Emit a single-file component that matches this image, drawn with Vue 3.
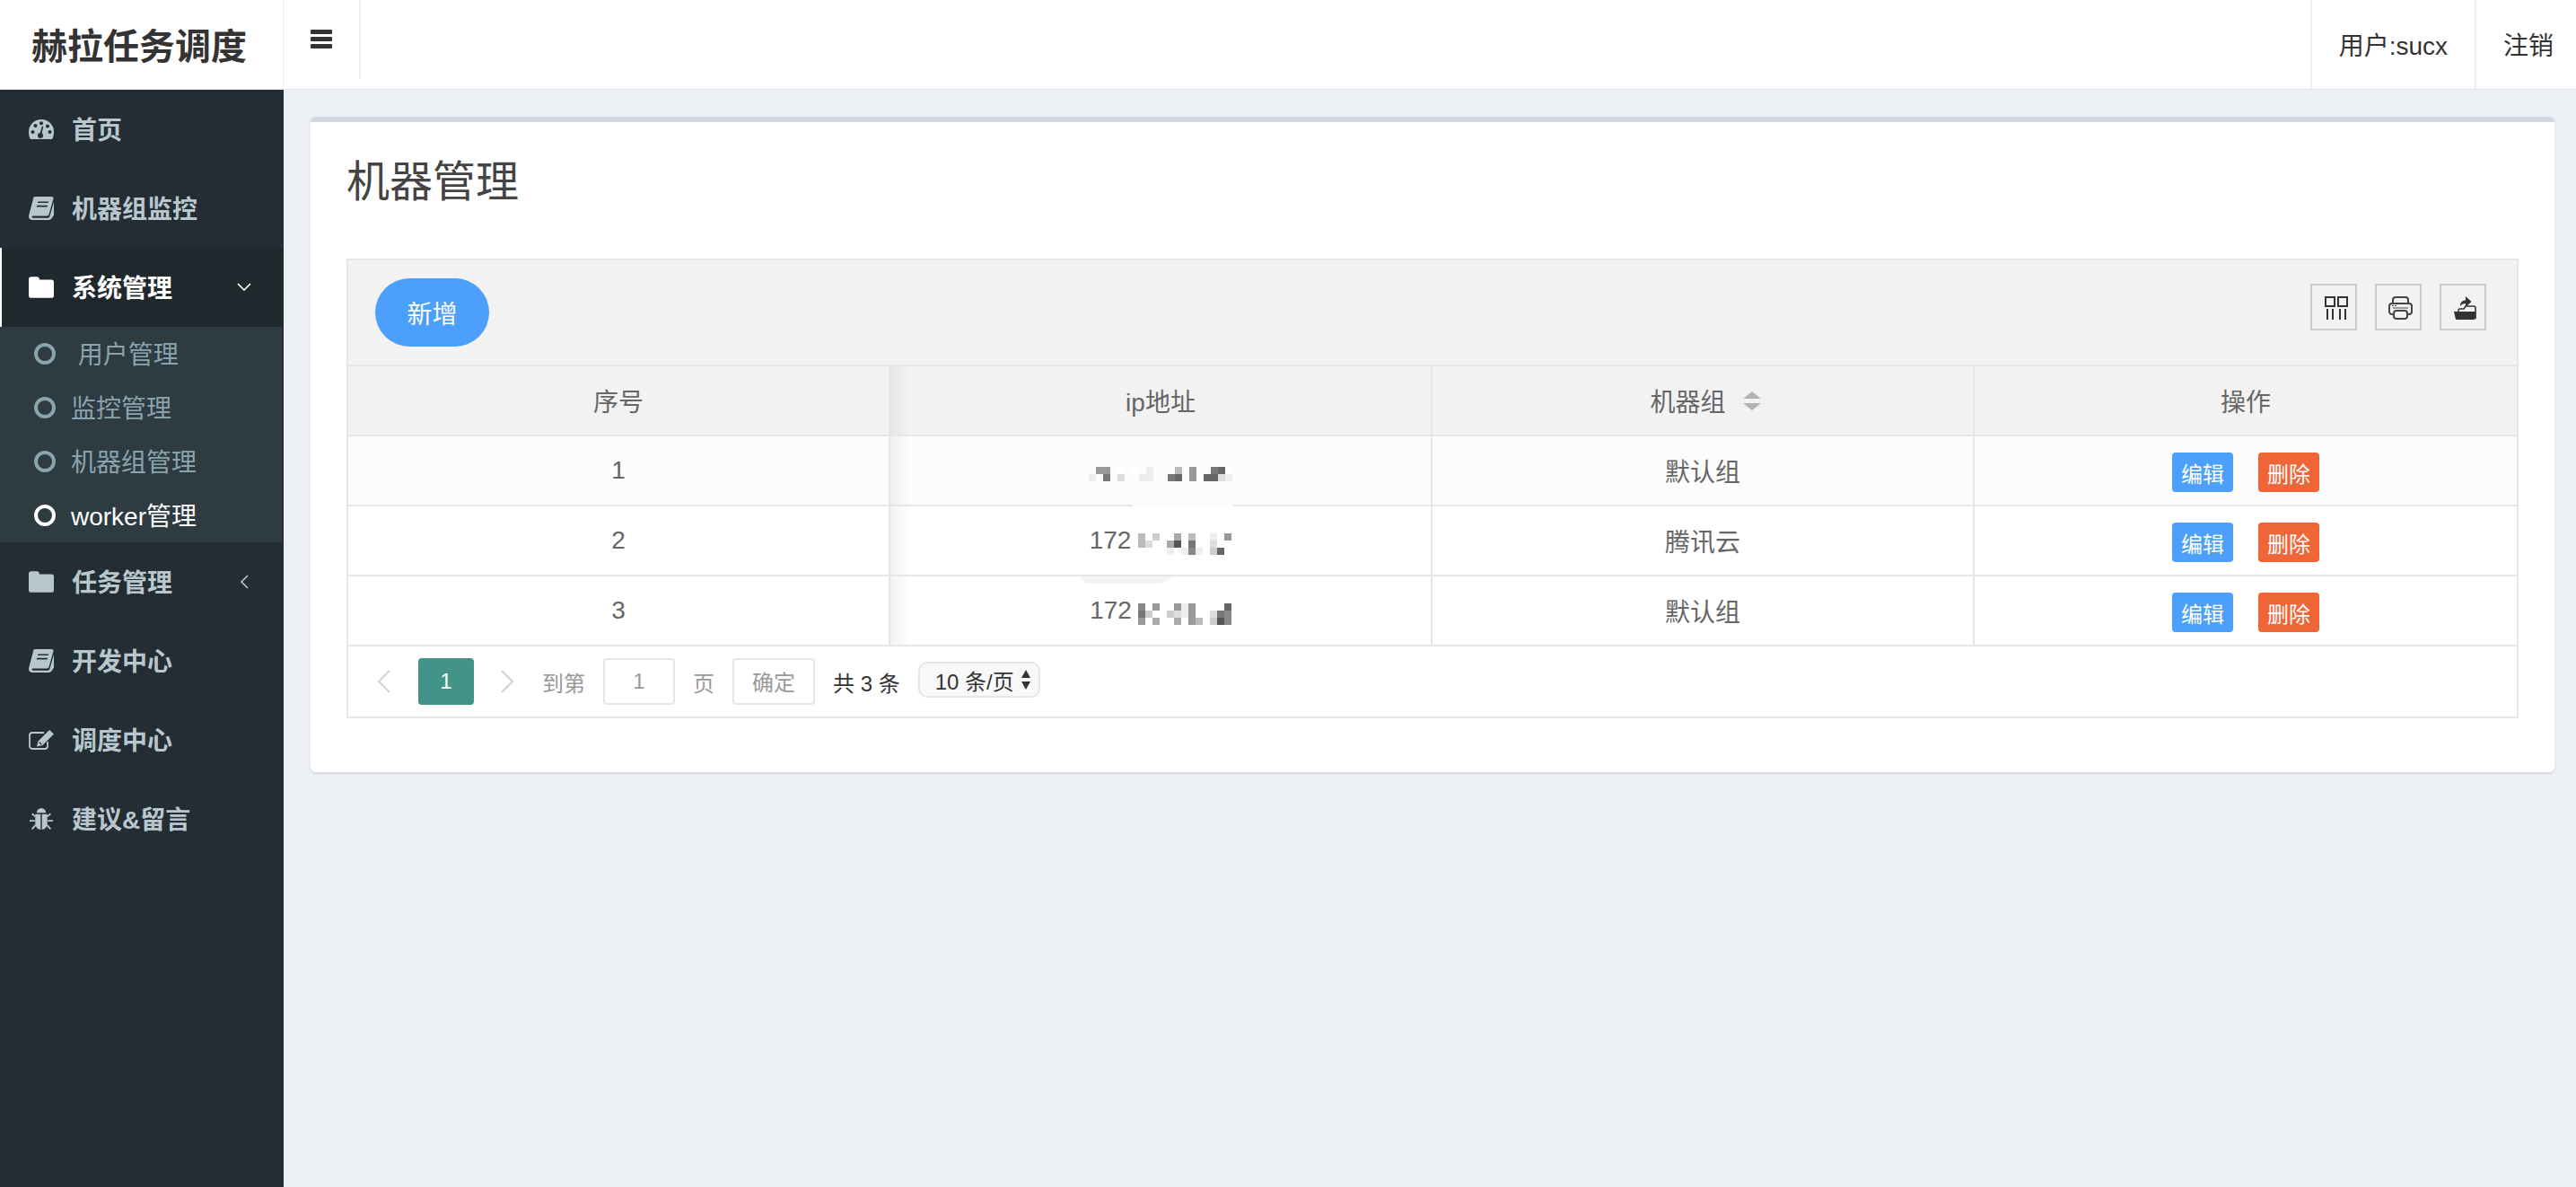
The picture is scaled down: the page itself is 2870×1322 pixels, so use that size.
<script setup>
const menu = [
  { label: '首页', icon: 'gauge' },
  { label: '机器组监控', icon: 'book' },
  {
    label: '系统管理',
    icon: 'folder',
    active: true,
    arrow: 'down',
    children: [
      { label: '\u00a0用户管理' },
      { label: '监控管理' },
      { label: '机器组管理' },
      { label: 'worker管理', current: true },
    ],
  },
  { label: '任务管理', icon: 'folder', arrow: 'left' },
  { label: '开发中心', icon: 'book' },
  { label: '调度中心', icon: 'edit' },
  { label: '建议&留言', icon: 'bug' },
]

// ip addresses are mosaicked in the source, one char per 8px tile (hex grey, . = empty)
const rows = [
  { no: 1, group: '默认组', prefix: '', offset: 0, tiles: ['.99.f.f.e...bf9..76f', 'e.7.d..ee..76.9.66de'] },
  { no: 2, group: '腾讯云', prefix: '172', offset: 0, tiles: ['.b.c..a.b..e.9', '.bd..a5.7..df.', 'f.f..e.e8e.c6.'] },
  { no: 3, group: '默认组', prefix: '172', offset: 7, tiles: ['8.9..9e9....6', '7c..cde9..d78', '9.a..a.9b.c58'] },
]

function tileColor(ch) {
  if (ch === '.') return 'transparent'
  return '#' + ch + ch + ch + ch + ch + ch
}
</script>

<template>
  <div class="page">
    <svg class="defs" aria-hidden="true">
      <symbol id="i-gauge" viewBox="0 0 28 22">
        <path fill="currentColor" d="M14 0A14 14 0 0 0 0 14c0 3 .7 5.6 1.8 8h24.4c1.100-2.400 1.800-5 1.800-8A14 14 0 0 0 14 0z" />
        <g fill="#232d33">
          <circle cx="4.500" cy="14" r="2" />
          <circle cx="7.500" cy="7" r="2" />
          <circle cx="14" cy="4.300" r="2" />
          <circle cx="21" cy="7.500" r="2" />
          <circle cx="23.500" cy="14" r="2" />
          <circle cx="13" cy="18" r="3" />
          <path d="M12 17l3-9.500 1.300.4-2.300 9.600z" />
        </g>
      </symbol>
      <symbol id="i-book" viewBox="0 0 26 24">
        <path fill="currentColor" d="M6.500 0h17.300c1.300 0 2 1 1.700 2.200L21 18c-.5 1.400-1.300 2-2.800 2H4.500c-1.500 0-1.500 2 0 2H20c.9 0 1.300-.4 1.600-1.300L26 5.500V19l-2 3c-.6 1.300-1.900 2-3.400 2H4C1 24-.6 21.600.2 19L4.700 2C5 .8 5.500 0 6.500 0z" />
        <path fill="#232d33" d="M9.500 5h11l-.4 1.500h-11zM8.500 9h11l-.4 1.500h-11z" />
      </symbol>
      <symbol id="i-folder" viewBox="0 0 26 22">
        <path fill="currentColor" d="M2.500 0h6C10 0 11 1 11 2.500V3h12.500C25 3 26 4 26 5.500v14c0 1.500-1 2.500-2.500 2.500h-21C1 22 0 21 0 19.500v-17C0 1 1 0 2.500 0z" />
      </symbol>
      <symbol id="i-edit" viewBox="0 0 28 22">
        <path fill="none" stroke="currentColor" stroke-width="1.800" d="M21 13v5c0 1.700-1.100 3-3 3H4c-1.900 0-3-1.300-3-3V6c0-1.900 1.100-3 3-3h13" />
        <path fill="currentColor" d="M23 0l5 4.500L15.500 17l-6.500 1.500 1.500-6z" />
        <path fill="#232d33" d="M12 13l2.800 2.700-.9.900-1.900-1.800-.6-.3z" />
      </symbol>
      <symbol id="i-bug" viewBox="0 0 25 25">
        <path fill="currentColor" d="M7.500 6a5 5 0 0 1 10 0z" />
        <path fill="currentColor" d="M6 7.500h5.800V24C8 23.500 6 20.500 6 17zM13.200 7.500H19V17c0 3.500-2 6.500-5.800 7z" />
        <path fill="none" stroke="currentColor" stroke-width="1.800" d="M6 10L2.500 7M19 10l3.500-3M5.500 14.500H0M19.500 14.500H25M6.500 19L2.500 23.500M18.500 19l4 4.500" />
      </symbol>
    </svg>

    <header class="topbar">
      <div class="logo">赫拉任务调度</div>
      <div class="toggle">
        <svg width="24" height="21" viewBox="0 0 24 21">
          <rect width="24" height="5" y="0" rx="1" fill="#333" />
          <rect width="24" height="5" y="8" rx="1" fill="#333" />
          <rect width="24" height="5" y="16" rx="1" fill="#333" />
        </svg>
      </div>
      <div class="topbar-right">
        <div class="top-item">用户:sucx</div>
        <div class="top-item logout">注销</div>
      </div>
    </header>

    <div class="body">
      <aside class="sidebar">
        <template v-for="item in menu" :key="item.label">
          <div class="menu-item" :class="{ active: item.active }">
            <svg class="menu-icon" :class="'icon-' + item.icon"><use :href="'#i-' + item.icon" /></svg>
            <span class="menu-label">{{ item.label }}</span>
            <svg v-if="item.arrow === 'down'" class="arrow" width="16" height="10" viewBox="0 0 16 10">
              <path d="M1 1l7 7 7-7" fill="none" stroke="#fff" stroke-width="1.600" />
            </svg>
            <svg v-if="item.arrow === 'left'" class="arrow arrow-left" width="10" height="16" viewBox="0 0 10 16">
              <path d="M9 1L2 8l7 7" fill="none" stroke="#b8c7ce" stroke-width="1.600" />
            </svg>
          </div>
          <div v-if="item.children" class="submenu">
            <div v-for="sub in item.children" :key="sub.label" class="sub-item" :class="{ current: sub.current }">
              <span class="dot"></span>
              <span class="sub-label">{{ sub.label }}</span>
            </div>
          </div>
        </template>
      </aside>

      <main class="main">
        <section class="card">
          <h1 class="title">机器管理</h1>

          <div class="table-box">
            <div class="toolbar">
              <button class="add-btn">新增</button>
              <div class="tools">
                <div class="tool">
                  <svg width="26" height="26" viewBox="0 0 26 26" fill="none" stroke="#333" stroke-width="2">
                    <rect x="1" y="1" width="10" height="10" />
                    <rect x="15" y="1" width="10" height="10" />
                    <path d="M3 14v12M9 14v12M17 14v12M23 14v12" />
                  </svg>
                </div>
                <div class="tool">
                  <svg width="27" height="26" viewBox="0 0 27 26" fill="none" stroke="#444" stroke-width="2">
                    <path d="M5 8V4c0-1.700 1-3 3-3h11c2 0 3 1.300 3 3v4" />
                    <path d="M5 20H4c-1.800 0-3-1.200-3-3v-6c0-1.800 1.200-3 3-3h19c1.800 0 3 1.200 3 3v6c0 1.800-1.200 3-3 3h-1" />
                    <rect x="6" y="16" width="15" height="9" rx="3" />
                    <path d="M5 13h17" stroke-width="1" />
                    <path d="M4 10.500h2M7 10.500h2" stroke-width="1" />
                  </svg>
                </div>
                <div class="tool">
                  <svg width="25" height="26" viewBox="0 0 25 26">
                    <path fill="none" stroke="#333" stroke-width="1.600" d="M5 17v-2l1-1h5l2-3h9c1 0 2 .7 2 2v12" />
                    <path fill="#333" d="M0 17h24v7c0 1-.7 2-2 2H3.500c-1 0-1.600-.5-1.800-1.500z" />
                    <path fill="#333" d="M7 11c-.5-4 2.500-6.500 6-6.500V0l6.500 6-6.500 6V8c-3 0-4.700 1-6 3z" />
                  </svg>
                </div>
              </div>
            </div>

            <div class="row head">
              <div class="cell">序号</div>
              <div class="cell cell-ip">ip地址</div>
              <div class="cell cell-sort">
                机器组
                <span class="sort">
                  <i class="caret up"></i>
                  <i class="caret down"></i>
                </span>
              </div>
              <div class="cell">操作</div>
            </div>

            <div v-for="row in rows" :key="row.no" class="row" :class="{ striped: row.no === 1 }">
              <div class="cell">{{ row.no }}</div>
              <div class="cell cell-ip">
                <span v-if="row.no === 2" class="wash"></span>
                <span v-if="row.no === 3" class="smudge"></span>
                <span v-if="row.prefix" class="ip-prefix">{{ row.prefix }}</span>
                <span
                  class="mosaic"
                  :style="{ gridTemplateColumns: `repeat(${row.tiles[0].length}, 8px)`, marginLeft: row.offset + 'px' }"
                >
                  <template v-for="(line, i) in row.tiles" :key="i">
                    <i v-for="(ch, j) in line" :key="j" :style="{ background: tileColor(ch) }"></i>
                  </template>
                </span>
              </div>
              <div class="cell">{{ row.group }}</div>
              <div class="cell actions">
                <button class="mini blue">编辑</button>
                <button class="mini red">删除</button>
              </div>
            </div>

            <div class="pager">
              <svg class="prev" width="15" height="26" viewBox="0 0 15 26">
                <path d="M14 1L2 13l12 12" fill="none" stroke="#d2d2d2" stroke-width="2" />
              </svg>
              <span class="page-no">1</span>
              <svg class="next" width="15" height="26" viewBox="0 0 15 26">
                <path d="M1 1l12 12L1 25" fill="none" stroke="#d2d2d2" stroke-width="2" />
              </svg>
              <span class="muted">到第</span>
              <span class="page-input">1</span>
              <span class="muted">页</span>
              <span class="page-ok">确定</span>
              <span class="total">共 3 条</span>
              <span class="page-size">
                10 条/页
                <svg width="12" height="22" viewBox="0 0 12 22">
                  <path d="M6 0l5 9H1zM6 22l-5-9h10z" fill="#333" />
                </svg>
              </span>
            </div>
          </div>
        </section>
      </main>
    </div>
  </div>
</template>

<style scoped>
.page {
  height: 100vh;
  display: flex;
  flex-direction: column;
  overflow: hidden;
  background: #ecf0f5;
  color: #333;
  font-family: "Liberation Sans", "Noto Sans CJK SC", sans-serif;
  font-size: 28px;
}

.defs {
  display: none;
}

/* Top bar */
.topbar {
  height: 100px;
  flex: none;
  display: flex;
  box-sizing: border-box;
  background: #fff;
  border-bottom: 1px solid #e2e4e8;
}

.logo {
  width: 316px;
  box-sizing: border-box;
  padding-left: 35px;
  border-right: 1px solid #eee;
  font-size: 40px;
  font-weight: 700;
  line-height: 104px;
}

.toggle {
  width: 86px;
  height: 88px;
  box-sizing: border-box;
  padding: 33px 0 0 30px;
  border-right: 2px solid #eee;
}

.toggle svg {
  display: block;
}

.topbar-right {
  margin-left: auto;
  display: flex;
}

.top-item {
  display: flex;
  align-items: center;
  padding: 0 30px 2px;
  border-left: 2px solid #eee;
}

.logout {
  padding-right: 25px;
}

/* Sidebar */
.body {
  flex: 1;
  display: flex;
  min-height: 0;
}

.sidebar {
  width: 316px;
  flex: none;
  background: #232d33;
}

.menu-item {
  height: 88px;
  display: flex;
  align-items: center;
  padding-left: 32px;
  box-sizing: border-box;
  color: #b8c7ce;
  font-weight: 700;
}

.menu-item.active {
  background: #1f282c;
  color: #fff;
  border-left: 2px solid #fff;
  padding-left: 30px;
}

.menu-icon {
  width: 28px;
  height: 26px;
  margin-right: 20px;
  flex: none;
}

.menu-label {
  flex: 1;
  margin-bottom: 2px;
}

.arrow {
  margin-right: 36px;
}

.arrow-left {
  margin-right: 39px;
}

.submenu {
  width: 314px;
  background: #2e3b41;
  color: #8aa4af;
}

.sub-item {
  height: 60px;
  display: flex;
  align-items: center;
  padding-left: 38px;
}

.sub-item.current {
  color: #fff;
}

.sub-label {
  margin-bottom: 2px;
}

.dot {
  width: 24px;
  height: 24px;
  box-sizing: border-box;
  border: 4px solid currentColor;
  border-radius: 50%;
  margin-right: 17px;
  flex: none;
}

/* Card */
.main {
  flex: 1;
  min-width: 0;
  padding: 30px 24px 30px 30px;
}

.card {
  box-sizing: border-box;
  padding: 0 40px 60px;
  background: #fff;
  border-top: 6px solid #d2d6de;
  border-radius: 6px;
  box-shadow: 0 2px 2px rgba(0, 0, 0, 0.1);
}

.title {
  margin: 0;
  padding: 42px 0 60px;
  font-size: 48px;
  font-weight: 400;
  line-height: 50px;
  color: #444;
}

.table-box {
  border: 2px solid #e6e6e6;
}

.toolbar {
  height: 116px;
  box-sizing: content-box;
  display: flex;
  justify-content: space-between;
  align-items: flex-start;
  border-bottom: 2px solid #e6e6e6;
  background: #f2f2f2;
}

.add-btn {
  width: 127px;
  height: 76px;
  margin: 20px 0 0 30px;
  padding: 0;
  border: 0;
  border-radius: 38px;
  background: #4c9ffa;
  color: #fff;
  font: inherit;
}

.tools {
  display: flex;
  gap: 20px;
  margin: 26px 34px 0 0;
}

.tool {
  width: 52px;
  height: 52px;
  box-sizing: border-box;
  display: flex;
  align-items: center;
  justify-content: center;
  border: 2px solid #ccc;
}

.tool svg {
  margin: 2px 0 0 5px;
}

/* Table */
.row {
  height: 78px;
  box-sizing: border-box;
  display: grid;
  grid-template-columns: repeat(4, 1fr);
  border-bottom: 2px solid #e6e6e6;
  background: #fff;
  color: #666;
}

.row.head {
  background: #f2f2f2;
}

.row.striped {
  background: #fcfcfc;
}

.cell {
  position: relative;
  display: flex;
  align-items: center;
  justify-content: center;
  border-right: 2px solid #e6e6e6;
}

.cell:last-child {
  border-right: 0;
}

.cell-ip::before {
  content: "";
  position: absolute;
  left: 0;
  top: 0;
  bottom: 0;
  width: 22px;
  background: linear-gradient(to right, rgba(0, 0, 0, 0.05), rgba(0, 0, 0, 0));
}

.ip-prefix {
  line-height: 1;
}

.mosaic {
  display: inline-grid;
  grid-auto-rows: 8px;
  margin-top: 8px;
}

.mosaic i {
  display: block;
}

.wash {
  position: absolute;
  left: 270px;
  top: -2px;
  width: 112px;
  height: 4px;
  background: #fff;
}

.smudge {
  position: absolute;
  left: 210px;
  top: 0;
  width: 106px;
  height: 8px;
  background: #f4f4f4;
  clip-path: polygon(0 0, 100% 0, 86% 100%, 8% 100%);
}

.cell-sort {
  padding-left: 6px;
}

.sort {
  display: inline-flex;
  flex-direction: column;
  gap: 5px;
  margin-left: 19px;
}

.caret {
  display: block;
  width: 0;
  height: 0;
  border-left: 10px solid transparent;
  border-right: 10px solid transparent;
}

.caret.up {
  border-bottom: 8px solid #b2b2b2;
}

.caret.down {
  border-top: 8px solid #b2b2b2;
}

.actions {
  gap: 28px;
  padding-top: 4px;
}

.mini {
  width: 68px;
  height: 44px;
  padding: 0;
  border: 0;
  border-radius: 4px;
  color: #fff;
  font: inherit;
  font-size: 24px;
}

.blue {
  background: #4c9ffa;
}

.red {
  background: #ee6638;
}

/* Pager */
.pager {
  height: 78px;
  display: flex;
  align-items: center;
  gap: 20px;
  padding-left: 32px;
  font-size: 24px;
  color: #333;
}

.prev {
  margin-right: 11px;
}

.next {
  margin: 0 11px 0 10px;
}

.page-no {
  width: 62px;
  height: 52px;
  line-height: 52px;
  text-align: center;
  border-radius: 4px;
  background: #429488;
  color: #fff;
}

.muted {
  color: #999;
}

.page-input,
.page-ok {
  height: 52px;
  box-sizing: border-box;
  line-height: 48px;
  text-align: center;
  border: 2px solid #e6e6e6;
  border-radius: 4px;
  background: #fff;
  color: #999;
}

.page-input {
  width: 80px;
}

.page-ok {
  width: 92px;
  line-height: 52px;
}

.total {
  white-space: nowrap;
}

.page-size {
  width: 136px;
  height: 40px;
  box-sizing: border-box;
  display: flex;
  align-items: center;
  justify-content: space-between;
  margin-bottom: 4px;
  padding: 0 8px 0 17px;
  border: 2px solid #e6e6e6;
  border-radius: 10px;
  background: #f8f8f8;
  white-space: nowrap;
}
</style>
